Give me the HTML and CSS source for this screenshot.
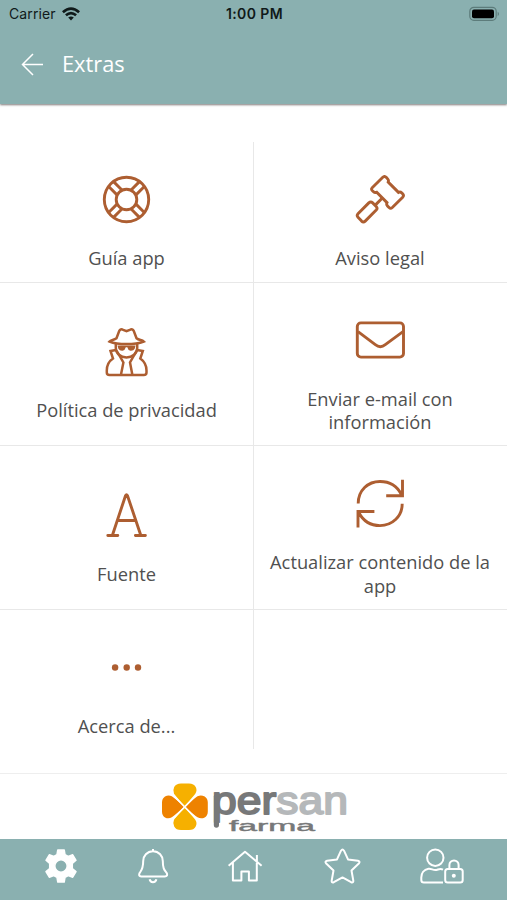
FILE: index.html
```html
<!DOCTYPE html>
<html lang="es">
<head>
<meta charset="utf-8">
<meta name="viewport" content="width=device-width, initial-scale=1">
<title>Extras</title>
<link rel="stylesheet" href="styles.css">
</head>
<body>
<div class="app">
  <header class="header">
    <div class="status">
      <div class="carrier"><span class="carrier-name">Carrier</span>
        <svg class="wifi" viewBox="62 6 18 14"><g fill="none" stroke="#101a1a" stroke-width="2.7"><path d="M62.9 11.2Q71 4.2 79.1 11.2"/><path d="M65.9 14.3Q71 10 76.1 14.3"/></g><path d="M68.2 16.6Q71 14.3 73.8 16.6L71 19.5Z" fill="#101a1a"/></svg>
      </div>
      <span class="clock">1:00 PM</span>
      <svg class="battery" viewBox="470 5 31 16"><rect x="470.8" y="6.3" width="26.4" height="13" rx="4" fill="none" stroke="#5d7c7b" stroke-width="1.2"/><rect x="473" y="8.5" width="22" height="8.8" rx="2" fill="#000"/><path d="M498.7 10.8Q501.3 13 498.7 15.2Z" fill="#5d7c7b"/></svg>
    </div>
    <div class="titlebar">
      <svg class="back" viewBox="21 53 23 23"><path d="M43 64.5H22.5M33 54L22.5 64.5L33 75" fill="none" stroke="#fff" stroke-width="1.5"/></svg>
      <h1 class="title">Extras</h1>
    </div>
  </header>

  <main class="grid">
    <a class="cell">
      <svg class="icon" viewBox="102 175.5 50 50"><circle cx="126.5" cy="200" r="22.2"/><circle cx="126.5" cy="200" r="10.3"/><path d="M131.1 190.5L139.2 182.4M136 195.4L144.1 187.3M121.9 209.5L113.8 217.6M117 204.6L108.9 212.7M121.9 190.5L113.8 182.4M117 195.4L108.9 187.3M131.1 209.5L139.2 217.6M136 204.6L144.1 212.7"/></svg>
      <span class="label">Guía app</span>
    </a>
    <a class="cell">
      <svg class="icon" viewBox="355 175.5 50 50"><path d="M372.2 188.2L382.8 177.8Q384.5 176.2 386.2 177.8L387.8 179.6Q388.9 180.8 388.2 182.6L398.5 192.9Q400.3 192.1 401.7 193.3L402.8 194.5Q404.2 196.1 402.7 197.7L392.3 208Q390.6 209.5 389 208L387.5 206.4Q386.1 204.9 387 203.1L376.7 192.8Q374.9 193.6 373.5 192.2L372.2 191Q370.8 189.6 372.2 188.2Z"/><path d="M382.6 198.3L376 204.9M368.8 203.4L358 214.2Q356.4 216 358 217.7L361.6 221.6Q363.4 223.4 365.2 221.6L376.2 210.6Q377.9 208.8 376.2 207L372.7 203.4Q370.8 201.6 368.8 203.4Z"/></svg>
      <span class="label">Aviso legal</span>
    </a>
    <a class="cell">
      <svg class="icon" viewBox="102 327 50 50"><g stroke-width="2.5"><path d="M109.5 341.6C111 339.8 114 340.3 116.5 338.2L119.2 331.1Q120.4 328.5 123.2 329.8L126.5 331.2L129.8 329.8Q132.6 328.5 133.8 331.1L136.5 338.2C139 340.3 142 339.8 143.8 341.6C138 343.8 132 344.1 126.5 344.1S115 343.8 109.5 341.6Z"/><path d="M115.8 344V348C115.8 353.5 120.5 357.4 126.5 357.4S137.2 353.5 137.2 348V344"/><path d="M116 350L110.5 351L113 358.5C108.5 361.5 106.8 365.5 106.8 370.5V372.5Q106.8 375 109.5 375H143.8Q146.5 375 146.5 372.5V370.5C146.5 365.5 144.5 361.5 140.3 358.5L142.8 351L137 350M116.5 350.5L123.4 362.5L121 374.5M136.8 350.5L130 362.5L132.3 374.5"/></g><path d="M117.5 345.5H135.6L134.7 348.7Q133.6 350.9 130.5 350.7Q128 350.3 127.3 347.2H125.8Q125 350.3 122.5 350.7Q119.5 350.9 118.4 348.7Z" fill="#ad5e31" stroke="none"/></svg>
      <span class="label">Política de privacidad</span>
    </a>
    <a class="cell">
      <svg class="icon" viewBox="355 315.5 50 50"><rect x="357.3" y="323.4" width="46.2" height="34.2" rx="3.6"/><path d="M358 332.2L375.3 345.2Q380.3 349.1 385.3 345.2L403 332.2"/></svg>
      <span class="label">Enviar e-mail con información</span>
    </a>
    <a class="cell">
      <svg class="icon" viewBox="102 490.5 50 50"><path stroke-linecap="round" stroke-linejoin="round" d="M107.8 536H117.8M135.4 536H145.4M112.5 535.5L125.5 496.2Q126.5 494.4 127.5 496.2L140.7 535.5M117.7 521H135.8"/></svg>
      <span class="label">Fuente</span>
    </a>
    <a class="cell">
      <svg class="icon" viewBox="355 479.5 50 50"><path d="M358.2 504C358.2 490.7 368 482 380 482C389.5 482 397.2 486.7 401.5 495.2M402.5 480.3V496.3H386.2M402.2 504.3C402.2 517.2 392 526.1 380 526.1C370.5 526.1 363 521.1 358.8 513M358 528V512H374.4"/></svg>
      <span class="label">Actualizar contenido de la app</span>
    </a>
    <a class="cell">
      <svg class="icon" viewBox="102 642.5 50 50"><g fill="#ad5e31" stroke="none"><circle cx="115.1" cy="668" r="3.2"/><circle cx="126.7" cy="668" r="3.2"/><circle cx="138" cy="668" r="3.2"/></g></svg>
      <span class="label">Acerca de...</span>
    </a>
    <div class="cell"></div>
  </main>

  <div class="brand">
    <svg class="logo" viewBox="160 773.5 200 64">
      <path fill="#f6b000" d="M184.5 805.5Q177 797 174 793.2Q172.5 790 174.2 786.5Q176 783 181 783H189Q194 783 195.7 786.5Q197.5 790 195.3 793.2Q192 797.5 184.5 805.5ZM184.5 807Q177 815 174 819.2Q172.5 822.5 174.2 826Q176 829.6 181 829.6H189Q194 829.6 195.7 826Q197.5 822.5 195.3 819.2Q192 815 184.5 807Z"/>
      <path fill="#ee8200" d="M184 806.3Q176 798.5 171.8 795.8Q168.5 794.3 165 796Q162 798 162 802V811Q162 815 165 817Q168.5 818.8 171.8 816.8Q176 814 184 806.3ZM185.3 806.3Q193 798.5 197.5 795.8Q201 794.3 204.7 796Q207.8 798 207.8 802V811Q207.8 815 204.7 817Q201 818.8 197.5 816.8Q193 814 185.3 806.3Z"/>
      <path d="M174.5 796L195 817M195 796L174.5 817" stroke="#fff" stroke-width="1.6"/>
      <text class="word" x="212" y="813" textLength="136" lengthAdjust="spacingAndGlyphs"><tspan class="dark">per</tspan><tspan class="light">san</tspan></text>
      <path d="M216.4 796V824.6" stroke="#777879" stroke-width="5.2" stroke-linecap="round"/>
      <text class="sub" x="229" y="830.8" textLength="86" lengthAdjust="spacingAndGlyphs">farma</text>
    </svg>
  </div>

  <nav class="tabs">
    <svg width="33" height="36" viewBox="45 848 33 36"><path fill="#fff" fill-rule="evenodd" stroke="#fff" stroke-width="1.5" stroke-linejoin="round" d="M57.8 850H64.2L65 854.7L68.2 856.5L72.7 854.8L76 860.3L72.3 863.4V868.6L76 871.6L72.7 877.2L68.2 875.5L65 877.3L64.2 882H57.8L57 877.3L53.8 875.5L49.3 877.2L46 871.6L49.7 868.6V863.4L46 860.3L49.3 854.8L53.8 856.5L57 854.7ZM61 859.8A6.2 6.2 0 1 0 61 872.2A6.2 6.2 0 1 0 61 859.8Z"/></svg>
    <svg width="31" height="36" viewBox="137 848 31 36"><path d="M152 849V851M152 851.2C146 851.2 142.2 856 142.2 861C142.2 869 140.5 870.2 138.6 873Q137.2 876.3 140.2 876.4H163.8Q167.1 876.3 165.7 873C163.5 870.2 161.8 869 161.8 861C161.8 856 158 851.2 152 851.2ZM148.6 879.3Q149.2 882.2 152 882.2T155.4 879.3"/></svg>
    <svg width="36" height="36" viewBox="228 848 36 36"><path d="M228.6 865.7L245 851.7L261.6 865.7M232.9 862.7V880.6H241.4V871.5H248.9V880.6H256.8V862.7M256.9 861V854.9"/></svg>
    <svg width="37" height="36" viewBox="324 848 37 36"><path d="M341 850.7Q342.5 848.5 344 850.7L348 859.4L358 860.8Q360.6 861.4 358.8 863.5L351.5 870.5L353.3 880.6Q353.6 883 351.1 882.2L342.5 877.4L333.8 882.2Q331.3 883 331.7 880.6L333.5 870.5L326.2 863.5Q324.4 861.4 327 860.8L337 859.4Z"/></svg>
    <svg width="44" height="36" viewBox="420 848 44 36"><circle cx="435.3" cy="857.7" r="8.2"/><path d="M443 869.6C439.5 867.8 438 870 435.4 870C432.5 870 431.5 868.5 428.5 868.8C423.8 869.6 421.3 873.3 421.3 877.5V880Q421.3 882.6 424 882.6H443"/><rect x="445.2" y="868.9" width="17.5" height="13.6" rx="2.5"/><path d="M449.4 868.8V865A4.6 4.6 0 0 1 458.6 865V868.8"/><circle cx="453.8" cy="875.7" r="2" fill="#fff" stroke="none"/></svg>
  </nav>
</div>
</body>
</html>
```
FILE: styles.css
```css
* {
  box-sizing: border-box;
}

body {
  margin: 0;
  background: #fff;
  font-family: "Open Sans", sans-serif;
}

.app {
  display: flex;
  flex-direction: column;
  width: 507px;
  height: 900px;
  overflow: hidden;
}

.header {
  flex: none;
  height: 104px;
  background: #8ab0b0;
  box-shadow: 0 1px 2px rgba(60, 50, 50, 0.65);
}

.status {
  display: grid;
  grid-template-columns: 1fr auto 1fr;
  align-items: center;
  height: 27px;
  padding: 0 7px 0 9px;
  color: #101a1a;
  font-family: Inter, sans-serif;
  font-size: 14px;
}

.carrier {
  display: flex;
  align-items: center;
  gap: 6px;
}

.carrier-name {
  letter-spacing: 0.1px;
}

.wifi {
  width: 18px;
  height: 14px;
}

.clock {
  font-weight: 600;
  letter-spacing: 0.4px;
}

.battery {
  justify-self: end;
  width: 31px;
  height: 16px;
}

.titlebar {
  display: flex;
  align-items: center;
  gap: 18px;
  height: 75px;
  padding-left: 21px;
}

.back {
  width: 23px;
  height: 23px;
}

.title {
  margin: 0;
  padding-bottom: 2px;
  color: #fff;
  font-size: 21.8px;
  font-weight: 400;
  line-height: 30px;
}

.grid {
  display: grid;
  flex: none;
  grid-template-columns: 254px 253px;
  grid-template-rows: 141px 163px 164px 139px;
  margin-top: 38px;
}

.cell {
  display: flex;
  flex-direction: column;
  align-items: center;
  justify-content: center;
  gap: 21.5px;
  padding: 32px 12px 11.5px;
  border-bottom: 1px solid #e8e8e8;
}

.cell:nth-child(odd) {
  border-right: 1px solid #e8e8e8;
}

.cell:nth-child(even) {
  padding-right: 13px;
}

.cell:nth-last-child(-n + 2) {
  border-bottom: 0;
}

.icon {
  flex: none;
  width: 50px;
  height: 50px;
  fill: none;
  stroke: #ad5e31;
  stroke-width: 2.9;
}

.label {
  color: #505050;
  font-size: 18.3px;
  line-height: 23.5px;
  text-align: center;
}

.brand {
  display: flex;
  flex: none;
  height: 66px;
  margin-top: 24px;
  padding-left: 160px;
  border-top: 1px solid #eee;
}

.logo {
  width: 200px;
  height: 64px;
}

.word {
  font: 39px "Liberation Sans", sans-serif;
  stroke-width: 1.8;
  stroke-linejoin: round;
}

.dark {
  fill: #777879;
  stroke: #777879;
}

.light {
  fill: #b5b8ba;
  stroke: #b5b8ba;
}

.sub {
  fill: #777879;
  stroke: #777879;
  stroke-width: 0.4;
  font: 14px "Liberation Sans", sans-serif;
}

.tabs {
  display: flex;
  justify-content: space-between;
  flex: 1;
  padding: 9px 43px 0 45px;
  background: #8ab0b0;
}

.tabs svg {
  flex: none;
  fill: none;
  stroke: #fff;
  stroke-width: 2;
  stroke-linejoin: round;
}
```
